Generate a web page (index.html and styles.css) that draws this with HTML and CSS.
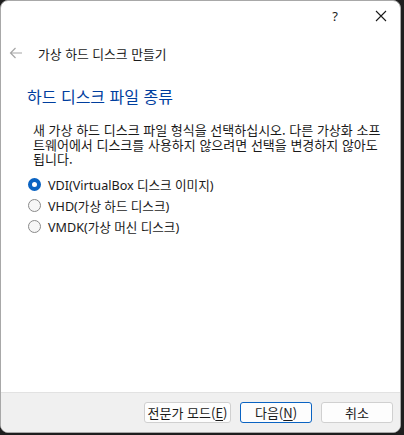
FILE: index.html
```html
<!DOCTYPE html>
<html lang="ko">
<head>
<meta charset="utf-8">
<link rel="stylesheet" href="styles.css">
</head>
<body>
<div class="window">
  <div class="titlebar">
    <span class="help">?</span>
    <span class="close">
      <svg width="12" height="12" viewBox="0 0 12 12"><path d="M1 1L11 11M11 1L1 11" stroke="#1a1a1a" stroke-width="1.1" fill="none"/></svg>
    </span>
  </div>
  <div class="content">
    <div class="navrow">
      <svg class="back" width="14" height="12" viewBox="0 0 14 12"><path d="M13 6H1.5M6.5 1L1.5 6L6.5 11" stroke="#a6a6a6" stroke-width="1.2" fill="none"/></svg>
      <span class="navtitle">가상 하드 디스크 만들기</span>
    </div>
    <h1 class="heading">하드 디스크 파일 종류</h1>
    <p class="desc"><span class="line">새 가상 하드 디스크 파일 형식을 선택하십시오. 다른 가상화 소프</span><span class="line">트웨어에서 디스크를 사용하지 않으려면 선택을 변경하지 않아도</span><span class="line">됩니다.</span></p>
    <div class="options">
      <label class="opt"><span class="radio checked"></span>VDI(VirtualBox 디스크 이미지)</label>
      <label class="opt"><span class="radio"></span>VHD(가상 하드 디스크)</label>
      <label class="opt"><span class="radio"></span>VMDK(가상 머신 디스크)</label>
    </div>
  </div>
  <div class="footer">
    <button class="btn btn-expert">전문가 모드(<u>E</u>)</button>
    <button class="btn btn-default">다음(<u>N</u>)</button>
    <button class="btn">취소</button>
  </div>
</div>
</body>
</html>
```

FILE: styles.css
```css
html, body {
  margin: 0;
  padding: 0;
  background: #1e1e1e;
}
body {
  width: 404px;
  height: 435px;
  overflow: hidden;
  font-family: "Noto Sans", "Noto Sans CJK KR", sans-serif;
  color: #1a1a1a;
}
.window {
  width: 399px;
  height: 431px;
  background: #ffffff;
  border: 1px solid #a8a8a8;
  border-radius: 8px;
  display: flex;
  flex-direction: column;
  overflow: hidden;
}
.titlebar {
  height: 30px;
  display: flex;
  align-items: center;
  justify-content: flex-end;
  flex-shrink: 0;
}
.help {
  font-size: 13px;
  margin-right: 37px;
  line-height: 1;
}
.close {
  display: flex;
  margin-right: 13px;
}
.content {
  flex: 1;
  display: flex;
  flex-direction: column;
}
.navrow {
  display: flex;
  align-items: center;
  height: 20px;
  margin-top: 12px;
  padding-left: 8px;
}
.back {
  margin-right: 15px;
}
.navtitle {
  font-family: "Noto Sans CJK KR", sans-serif;
  font-size: 12.8px;
}
.heading {
  margin: 23px 0 0 26px;
  font-family: "Noto Sans CJK KR", sans-serif;
  font-weight: normal;
  font-size: 16px;
  line-height: 20px;
  color: #003e9e;
}
.desc {
  margin: 17px 4px 0 32px;
  font-family: "Noto Sans CJK KR", sans-serif;
  font-size: 13px;
  display: flex;
  flex-direction: column;
  white-space: nowrap;
}
.line {
  display: block;
  height: 14.5px;
  line-height: 14.5px;
}
.options {
  display: flex;
  flex-direction: column;
  gap: 8px;
  margin: 11px 0 0 27px;
}
.opt {
  display: flex;
  align-items: center;
  height: 13px;
  font-size: 12.6px;
  font-family: "Noto Sans", "Noto Sans CJK KR", sans-serif;
}
.radio {
  box-sizing: border-box;
  width: 13px;
  height: 13px;
  border-radius: 50%;
  border: 1px solid #8a8a8a;
  background: #f6f6f6;
  margin-right: 7px;
  flex-shrink: 0;
}
.radio.checked {
  border: 4px solid #0a63c2;
  background: #ffffff;
}
.footer {
  height: 39px;
  flex-shrink: 0;
  background: #f0f0f0;
  border-top: 1px solid #e2e2e2;
  display: flex;
  align-items: center;
  justify-content: flex-end;
  gap: 9px;
  padding-right: 7px;
}
.btn {
  height: 21px;
  width: 72px;
  padding: 0;
  font-family: "Noto Sans CJK KR", sans-serif;
  font-size: 13px;
  color: #1a1a1a;
  background: #fdfdfd;
  border: 1px solid #d0d0d0;
  border-radius: 3px;
  line-height: 1;
}
.btn-expert {
  width: 87px;
}
.btn-default {
  border-color: #0a63c2;
}
u {
  text-underline-offset: 2px;
}
```
